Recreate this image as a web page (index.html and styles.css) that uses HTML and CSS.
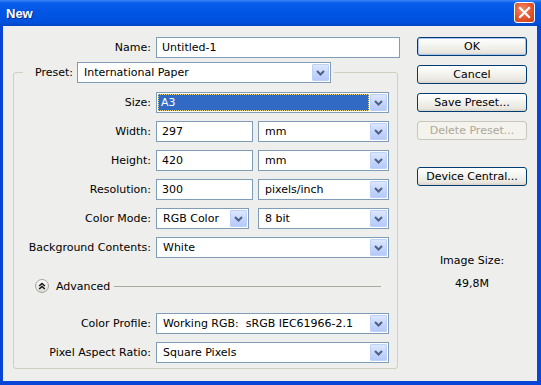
FILE: index.html
```html
<!DOCTYPE html>
<html lang="en">
<head>
    <meta charset="UTF-8">
    <title>New</title>
    <link rel="stylesheet" href="styles.css">
</head>
<body>
    <div class="window">
        <div class="titlebar">
            <span class="title">New</span>
            <span class="close-btn">
                <svg width="13" height="13" viewBox="0 0 13 13"><path d="M2 2 L11 11 M11 2 L2 11" stroke="#fff" stroke-width="2.2" stroke-linecap="square"/></svg>
            </span>
        </div>

        <div class="frame">
            <div class="main">
                <div class="row">
                    <label class="lbl name-lbl">Name:</label>
                    <div class="field name-field">Untitled-1</div>
                </div>

                <fieldset class="preset">
                    <legend>
                        <span>Preset:</span>
                        <div class="field combo preset-combo">International Paper<span class="arrow"><svg width="9" height="6" viewBox="0 0 9 6"><polyline points="1,1 4.5,4.5 8,1" fill="none" stroke="#4d6185" stroke-width="2"/></svg></span></div>
                    </legend>

                    <div class="rows">
                        <div class="row">
                            <label class="lbl">Size:</label>
                            <div class="field combo focus full"><span class="value">A3</span><span class="arrow"><svg width="9" height="6" viewBox="0 0 9 6"><polyline points="1,1 4.5,4.5 8,1" fill="none" stroke="#4d6185" stroke-width="2"/></svg></span></div>
                        </div>
                        <div class="row">
                            <label class="lbl">Width:</label>
                            <div class="field num">297</div>
                            <div class="field combo grow">mm<span class="arrow"><svg width="9" height="6" viewBox="0 0 9 6"><polyline points="1,1 4.5,4.5 8,1" fill="none" stroke="#4d6185" stroke-width="2"/></svg></span></div>
                        </div>
                        <div class="row">
                            <label class="lbl">Height:</label>
                            <div class="field num">420</div>
                            <div class="field combo grow">mm<span class="arrow"><svg width="9" height="6" viewBox="0 0 9 6"><polyline points="1,1 4.5,4.5 8,1" fill="none" stroke="#4d6185" stroke-width="2"/></svg></span></div>
                        </div>
                        <div class="row">
                            <label class="lbl">Resolution:</label>
                            <div class="field num">300</div>
                            <div class="field combo grow">pixels/inch<span class="arrow"><svg width="9" height="6" viewBox="0 0 9 6"><polyline points="1,1 4.5,4.5 8,1" fill="none" stroke="#4d6185" stroke-width="2"/></svg></span></div>
                        </div>
                        <div class="row">
                            <label class="lbl">Color Mode:</label>
                            <div class="field combo mode">RGB Color<span class="arrow"><svg width="9" height="6" viewBox="0 0 9 6"><polyline points="1,1 4.5,4.5 8,1" fill="none" stroke="#4d6185" stroke-width="2"/></svg></span></div>
                            <div class="field combo grow">8 bit<span class="arrow"><svg width="9" height="6" viewBox="0 0 9 6"><polyline points="1,1 4.5,4.5 8,1" fill="none" stroke="#4d6185" stroke-width="2"/></svg></span></div>
                        </div>
                        <div class="row">
                            <label class="lbl">Background Contents:</label>
                            <div class="field combo full">White<span class="arrow"><svg width="9" height="6" viewBox="0 0 9 6"><polyline points="1,1 4.5,4.5 8,1" fill="none" stroke="#4d6185" stroke-width="2"/></svg></span></div>
                        </div>

                        <div class="advanced">
                            <svg class="adv-icon" width="14" height="14" viewBox="0 0 14 14">
                                <defs>
                                    <linearGradient id="advGrad" x1="0" y1="0" x2="0" y2="1">
                                        <stop offset="0" stop-color="#ffffff"/>
                                        <stop offset="1" stop-color="#d8d8d4"/>
                                    </linearGradient>
                                </defs>
                                <circle cx="7" cy="7" r="6.5" fill="url(#advGrad)" stroke="#a5a5a0"/>
                                <polyline points="4.2,7 7,4.4 9.8,7" fill="none" stroke="#111" stroke-width="1.4"/>
                                <polyline points="4.2,10 7,7.4 9.8,10" fill="none" stroke="#111" stroke-width="1.4"/>
                            </svg>
                            <span class="adv-text">Advanced</span>
                            <span class="adv-line"></span>
                        </div>

                        <div class="row">
                            <label class="lbl">Color Profile:</label>
                            <div class="field combo full">Working RGB:&nbsp; sRGB IEC61966-2.1<span class="arrow"><svg width="9" height="6" viewBox="0 0 9 6"><polyline points="1,1 4.5,4.5 8,1" fill="none" stroke="#4d6185" stroke-width="2"/></svg></span></div>
                        </div>
                        <div class="row">
                            <label class="lbl">Pixel Aspect Ratio:</label>
                            <div class="field combo full">Square Pixels<span class="arrow"><svg width="9" height="6" viewBox="0 0 9 6"><polyline points="1,1 4.5,4.5 8,1" fill="none" stroke="#4d6185" stroke-width="2"/></svg></span></div>
                        </div>
                    </div>
                </fieldset>
            </div>

            <div class="side">
                <div class="btn default">OK</div>
                <div class="btn">Cancel</div>
                <div class="btn">Save Preset...</div>
                <div class="btn disabled">Delete Preset...</div>
                <div class="btn spaced">Device Central...</div>

                <div class="info">
                    <div>Image Size:</div>
                    <div class="info-value">49,8M</div>
                </div>
            </div>
        </div>
    </div>
</body>
</html>
```

FILE: styles.css
```css
body {
    margin: 0;
    font-family: "DejaVu Sans", sans-serif;
    font-size: 11px;
    color: #000;
}

.window {
    width: 541px;
    height: 385px;
    display: flex;
    flex-direction: column;
}

/* title bar */
.titlebar {
    height: 26px;
    display: flex;
    align-items: center;
    justify-content: space-between;
    padding: 0 6px;
    background: linear-gradient(#3d86f4 0, #0a5eee 3px, #0055e5 45%, #0052dd 85%, #0046c8 100%);
}

.title {
    font-family: "Liberation Sans", sans-serif;
    font-weight: bold;
    font-size: 13px;
    color: #fff;
    text-shadow: 1px 1px 0 #0b2a8a;
}

.close-btn {
    width: 21px;
    height: 21px;
    box-sizing: border-box;
    border: 1px solid #fff;
    border-radius: 3px;
    background: radial-gradient(circle at 40% 35%, #f08a68, #e0502a 60%, #c7401c);
    display: flex;
    align-items: center;
    justify-content: center;
    margin-top: -1px;
}

/* dialog body */
.frame {
    flex: 1;
    display: flex;
    background: #eeeeec;
    border: solid #0845d6;
    border-width: 0 4px 4px 3px;
    padding: 11px 10px 0 10px;
}

.main {
    width: 387px;
}

.row {
    display: flex;
    align-items: center;
    gap: 5px;
    height: 21px;
}

.lbl {
    width: 137px;
    text-align: right;
    white-space: nowrap;
}

.name-lbl {
    width: 138px;
}

.field {
    height: 21px;
    box-sizing: border-box;
    border: 1px solid #7f9db9;
    background: #fff;
    padding-left: 5px;
    display: flex;
    align-items: center;
    white-space: nowrap;
}

.name-field {
    width: 244px;
}

.num {
    width: 97px;
}

.combo {
    padding-left: 6px;
}

.full {
    width: 233px;
}

.grow {
    flex: 1;
}

.mode {
    width: 93px;
    margin-right: 4px;
}

.arrow {
    margin-left: auto;
    align-self: stretch;
    width: 17px;
    margin: 1px 1px 1px auto;
    box-sizing: border-box;
    border: 1px solid #bcd0f9;
    border-radius: 1px;
    background: linear-gradient(#dde7fd, #c3d4fb 60%, #b5cafa);
    display: flex;
    align-items: center;
    justify-content: center;
}

.focus {
    padding-left: 0;
}

.focus .value {
    flex: 1;
    align-self: stretch;
    margin: 1px;
    padding-left: 3px;
    background: #316ac5;
    color: #fff;
    outline: 1px dotted #e9d77a;
    outline-offset: -1px;
    display: flex;
    align-items: center;
}

/* preset group */
.preset {
    margin: 4px 0 0;
    padding: 0 8px 5px 0;
    width: 385px;
    box-sizing: border-box;
    min-width: 0;
    border: 1px solid #d0d0bf;
    border-radius: 3px;
}

.preset legend {
    margin-left: 9px;
    padding: 0 3px 0 12px;
    display: flex;
    align-items: center;
    gap: 4px;
}

.preset-combo {
    width: 254px;
}

.rows {
    display: flex;
    flex-direction: column;
    gap: 8px;
    padding-top: 9px;
}

.advanced {
    display: flex;
    align-items: center;
    height: 16px;
    margin: 12px 0 11px;
    padding-left: 21px;
}

.adv-text {
    margin-left: 7px;
}

.adv-line {
    flex: 1;
    margin: 1px 8px 0 4px;
    border-top: 1px solid #a9a99f;
}

/* buttons column */
.side {
    width: 110px;
    margin-left: 17px;
    display: flex;
    flex-direction: column;
}

.btn {
    height: 19px;
    box-sizing: border-box;
    border: 1px solid #003c74;
    border-radius: 3px;
    background: linear-gradient(#ffffff, #f5f5f1 40%, #e8e6de 85%, #d8d3c8);
    display: flex;
    align-items: center;
    justify-content: center;
}

.btn + .btn {
    margin-top: 9px;
}

.btn.default {
    box-shadow: inset 0 0 0 1px #a9c6f3;
}

.btn.disabled {
    border-color: #c9c7ba;
    color: #aca899;
    background: #f4f3ee;
}

.btn.spaced {
    margin-top: 27px;
}

.info {
    margin-top: 68px;
    text-align: center;
    line-height: 13px;
}

.info-value {
    margin-top: 10px;
}
```
